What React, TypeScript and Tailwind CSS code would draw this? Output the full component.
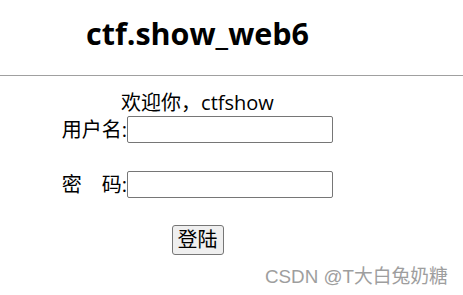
import React from 'react';

const latin = "font-['Open_Sans','Noto_Sans_CJK_SC',sans-serif]";

const App: React.FC = () => {
  return (
    <div className={`relative h-[295px] w-[463px] overflow-hidden bg-white text-black ${latin}`}>
      <div className="flex h-[75px] w-[395px] items-center justify-center pb-[8px]">
        <h1 className="text-[30.5px] font-bold leading-none">ctf.show_web6</h1>
      </div>
      <hr className="border-t border-[#a0a0a0]" />
      <div className="flex w-[395px] flex-col items-center pt-[14px] text-[20px] leading-[26px]">
        <div>欢迎你，ctfshow</div>
        <div className="flex items-center">
          <span>用户名:</span>
          <input className="h-[27px] w-[206px] rounded-[2px] border border-[#767676] px-1 outline-none" />
        </div>
        <div className="mt-[28px] flex items-center">
          <span>密&emsp;码:</span>
          <input className="h-[27px] w-[206px] rounded-[2px] border border-[#767676] px-1 outline-none" />
        </div>
        <button className="mt-[27px] h-[30px] rounded-[3px] border border-[#767676] bg-[#efefef] px-[5px] text-[20px] leading-none">
          登陆
        </button>
      </div>
      <div className="absolute left-[265px] top-[263px] font-['Liberation_Sans','Noto_Sans_CJK_SC',sans-serif] text-[18.8px] text-[#9e9e9e]">
        CSDN @T大白兔奶糖
      </div>
    </div>
  );
};

export default App;
